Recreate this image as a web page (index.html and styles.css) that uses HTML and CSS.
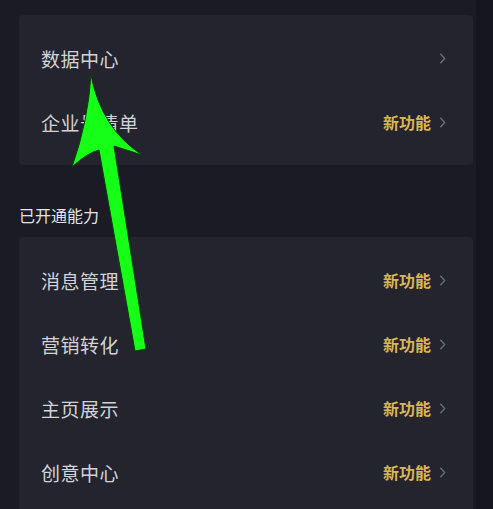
FILE: index.html
```html
<!DOCTYPE html>
<html lang="zh-CN">
<head>
  <meta charset="UTF-8" />
  <title>企业服务</title>
  <link rel="stylesheet" href="styles.css">
</head>
<body>
  <div class="page">
    <div class="card first">
      <div class="row">
        <span class="label">数据中心</span>
        <span class="side">
          <svg class="chev" viewBox="0 0 8 14"><path d="M1.5 1.5 L6.5 7 L1.5 12.5" /></svg>
        </span>
      </div>
      <div class="row">
        <span class="label">企业号清单</span>
        <span class="side">
          <span class="tag">新功能</span>
          <svg class="chev" viewBox="0 0 8 14"><path d="M1.5 1.5 L6.5 7 L1.5 12.5" /></svg>
        </span>
      </div>
    </div>

    <h2 class="section">已开通能力</h2>

    <div class="card second">
      <div class="row">
        <span class="label">消息管理</span>
        <span class="side">
          <span class="tag">新功能</span>
          <svg class="chev" viewBox="0 0 8 14"><path d="M1.5 1.5 L6.5 7 L1.5 12.5" /></svg>
        </span>
      </div>
      <div class="row">
        <span class="label">营销转化</span>
        <span class="side">
          <span class="tag">新功能</span>
          <svg class="chev" viewBox="0 0 8 14"><path d="M1.5 1.5 L6.5 7 L1.5 12.5" /></svg>
        </span>
      </div>
      <div class="row">
        <span class="label">主页展示</span>
        <span class="side">
          <span class="tag">新功能</span>
          <svg class="chev" viewBox="0 0 8 14"><path d="M1.5 1.5 L6.5 7 L1.5 12.5" /></svg>
        </span>
      </div>
      <div class="row">
        <span class="label">创意中心</span>
        <span class="side">
          <span class="tag">新功能</span>
          <svg class="chev" viewBox="0 0 8 14"><path d="M1.5 1.5 L6.5 7 L1.5 12.5" /></svg>
        </span>
      </div>
    </div>

    <!-- annotation arrow drawn over the screenshot -->
    <svg class="arrow" viewBox="0 0 493 509">
      <path d="M91 75 Q101 128 142 155 L114 146 L146 349 L135 351 L99 150 Q87 153 72 167 Q88 122 91 75 Z" />
    </svg>
  </div>
</body>
</html>
```

FILE: styles.css
```css
html, body {
  margin: 0;
  height: 100%;
  overflow: hidden;
  background-color: #15161f;
}
body {
  font-family: "Noto Sans CJK SC", "Noto Sans", sans-serif;
  color: #d2d3d7;
}
.page {
  position: relative;
  width: 457px;
  height: 100%;
  padding: 15px 0 0 19px;
  background-color: #1a1b25;
}
.card {
  width: 454px;
  background-color: #23242d;
  border-radius: 4px;
}
.first {
  padding: 11px 0;
}
.second {
  padding: 11px 0 40px;
}
.row {
  height: 64px;
  display: flex;
  align-items: center;
  justify-content: space-between;
  padding: 0 27px 0 22px;
}
.label {
  font-size: 19px;
  letter-spacing: 0.5px;
}
.side {
  display: flex;
  align-items: center;
  gap: 8px;
}
.tag {
  font-size: 16px;
  font-weight: bold;
  color: #d8b654;
}
.chev {
  width: 7px;
  height: 13px;
}
.chev path {
  fill: none;
  stroke: #6d6f78;
  stroke-width: 1.5;
}
.section {
  margin: 39px 0 11px;
  font-size: 16px;
  line-height: 22px;
  font-weight: normal;
  color: #e2e3e6;
}
.arrow {
  position: absolute;
  left: 0;
  top: 0;
  width: 493px;
  height: 509px;
}
.arrow path {
  fill: #16ff16;
  stroke: #0c3a10;
  stroke-width: 1;
}
```
